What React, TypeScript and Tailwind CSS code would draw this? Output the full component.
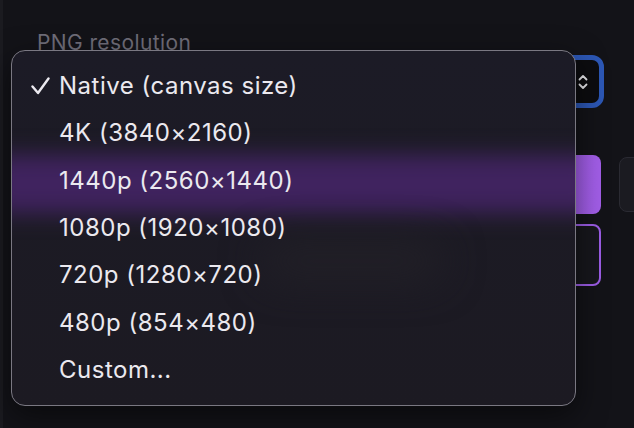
import React from "react";

const options = [
  "Native (canvas size)",
  "4K (3840×2160)",
  "1440p (2560×1440)",
  "1080p (1920×1080)",
  "720p (1280×720)",
  "480p (854×480)",
  "Custom...",
];

const App: React.FC = () => {
  const selected = 0;

  return (
    <div
      className="relative flex h-[428px] w-[634px] overflow-hidden bg-[#131318]"
      style={{ fontFamily: "Inter, 'Noto Sans', sans-serif" }}
    >
      <div className="w-[3px] shrink-0 bg-[#1b1b20]" />

      {/* export panel behind the menu */}
      <div className="ml-[10px] mt-[31px] flex w-[591px] shrink-0 flex-col">
        <label className="pl-[24px] text-[21px] leading-[24px] tracking-[0.4px] text-[#6f6d79]">
          PNG resolution
        </label>
        <div className="ml-[20px] flex h-[53px] items-center justify-end rounded-[12px] border-[5px] border-[#2c57b5] bg-[#0c0c0f] pr-[10px]">
          <svg width="12" height="20" viewBox="0 0 12 20" fill="none">
            <path
              d="M2.5 7.5 L6 4 L9.5 7.5 M2.5 12.5 L6 16 L9.5 12.5"
              stroke="#e6e6ea"
              strokeWidth="1.8"
              strokeLinecap="round"
              strokeLinejoin="round"
            />
          </svg>
        </div>
        <div className="mt-[47px] h-[59px] w-[588px] rounded-[8px] bg-gradient-to-r from-[#8f4fe0] to-[#a25ee8]" />
        <div className="ml-[20px] mt-[10px] h-[62px] w-[568px] rounded-[8px] border-2 border-[#9b5de5] bg-[#17171c]" />
      </div>

      <div className="ml-[15px] mt-[157px] h-[55px] w-[40px] shrink-0 rounded-[8px] border border-[#2a2a32] bg-[#1b1b21]" />

      {/* native popup menu; the purple band is the export button seen through the vibrancy */}
      <div className="absolute left-[11px] top-[50px] flex h-[356px] w-[565px] flex-col overflow-hidden rounded-[14px] border border-[#7a7882] bg-gradient-to-b from-[#1c1b26] to-[#1c1a22] py-[11px] shadow-[0_10px_30px_rgba(0,0,0,0.5)]">
        <div className="absolute -left-[20px] -right-[20px] top-[104px] h-[58px] bg-[#40235f] blur-[11px]" />
        <div className="absolute left-[250px] top-[192px] h-[36px] w-[180px] rounded-full bg-[#222027] blur-[20px]" />
        {options.map((opt, i) => (
          <div
            key={opt}
            className="relative flex h-[48px] items-center text-[24px] tracking-[0.5px] text-[#ebe9ef]"
          >
            <span className="flex w-[38px] justify-end">
              {i === selected && (
                <svg width="19" height="18" viewBox="0 0 19 18" fill="none">
                  <path
                    d="M1.5 9.5 L7 16 L17.5 1.5"
                    stroke="#ebe9ef"
                    strokeWidth="2.4"
                    strokeLinecap="round"
                    strokeLinejoin="round"
                  />
                </svg>
              )}
            </span>
            <span className="ml-[9px]">{opt}</span>
          </div>
        ))}
      </div>
    </div>
  );
};

export default App;
